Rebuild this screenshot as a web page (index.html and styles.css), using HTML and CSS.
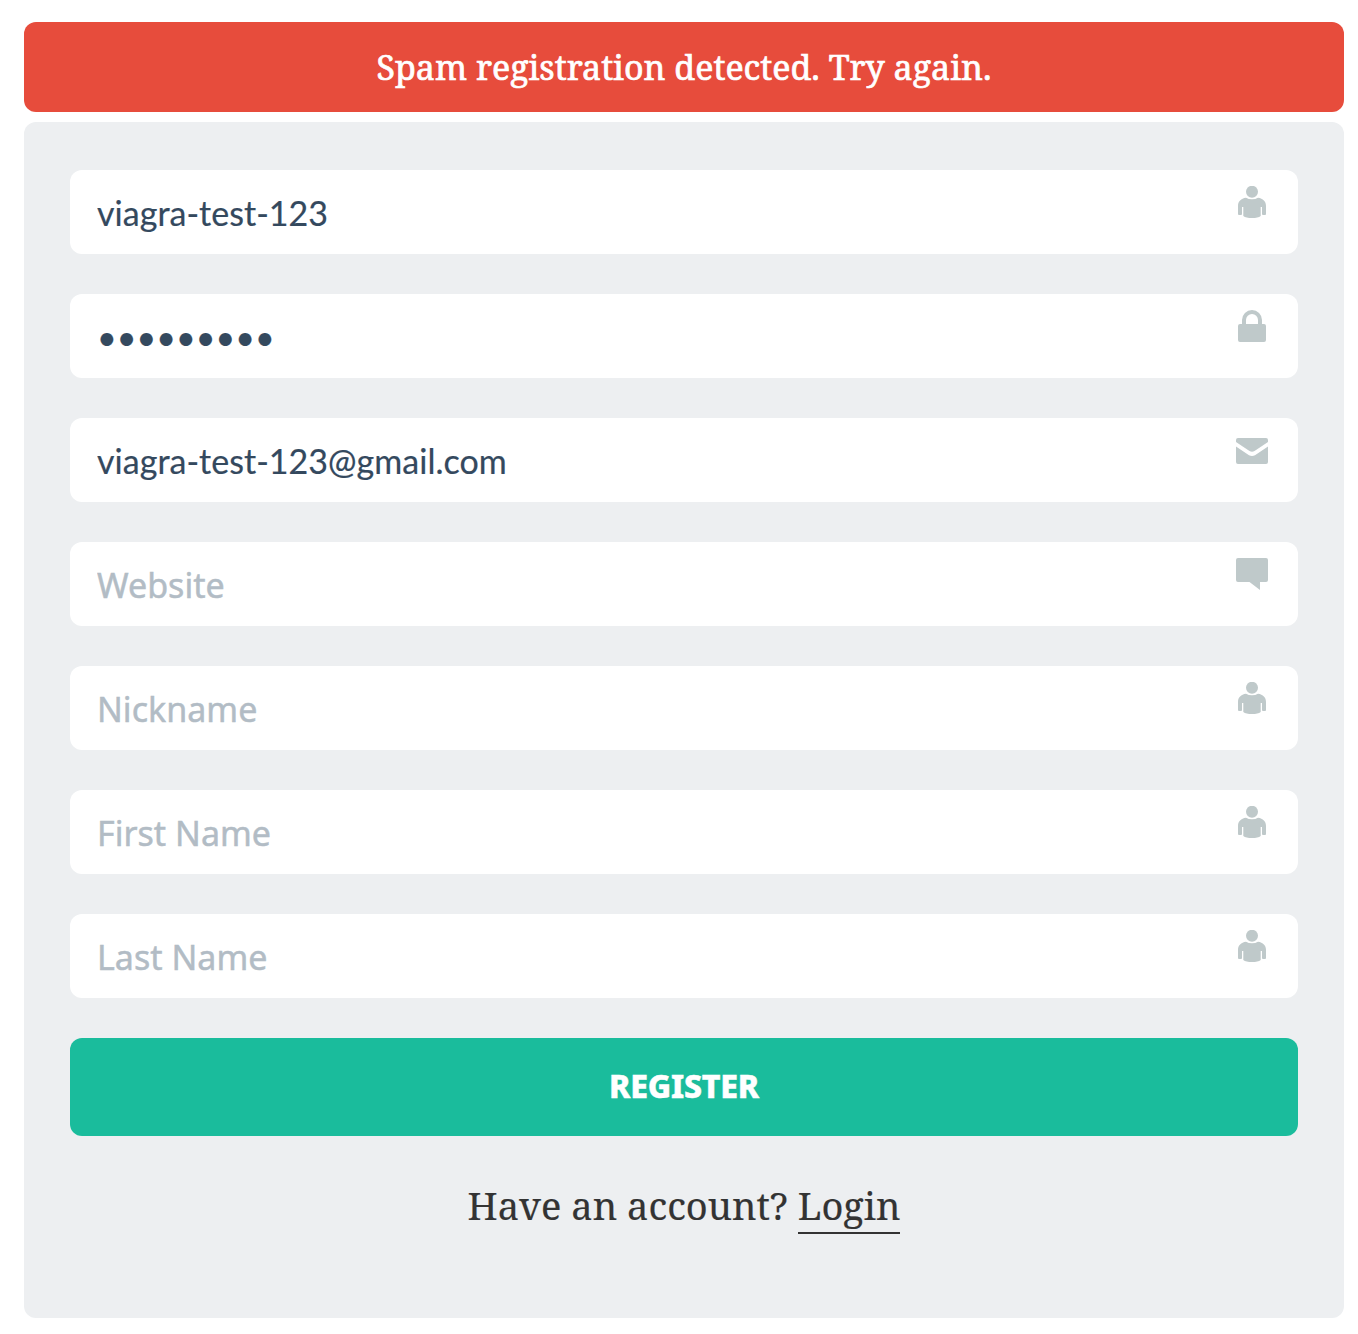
FILE: index.html
```html
<!DOCTYPE html>
<html lang="en">
<head>
<meta charset="utf-8">
<title>Register</title>
<link rel="stylesheet" href="styles.css">
</head>
<body>
<svg class="defs" width="0" height="0" aria-hidden="true">
  <symbol id="user" viewBox="0 0 32 32">
    <circle cx="16" cy="5.800" r="6"/>
    <path d="M10 11.800Q12.500 13.300 16 13.300T22 11.800C27 12.500 30 15.500 30 20V28.500Q28 29.500 26 28.500V21H24.700V30Q22 32 16 32T7.300 30V21H6V28.500Q4 29.500 2 28.500V20C2 15.500 5 12.500 10 11.800Z"/>
  </symbol>
  <symbol id="lock" viewBox="0 0 32 32">
    <path d="M6 14V10a10 10 0 0 1 20 0v4h2a2 2 0 0 1 2 2v14a2 2 0 0 1-2 2H4a2 2 0 0 1-2-2V16a2 2 0 0 1 2-2zM10 14h12v-4a6 6 0 0 0-12 0z"/>
  </symbol>
  <symbol id="mail" viewBox="0 0 32 32">
    <path d="M0 8V6a2 2 0 0 1 2-2h28a2 2 0 0 1 2 2v2L18.500 17Q16 18.500 13.500 17zM0 12.500L13 21.200Q16 22.800 19 21.200L32 12.500V28a2 2 0 0 1-2 2H2a2 2 0 0 1-2-2z"/>
  </symbol>
  <symbol id="chat" viewBox="0 0 32 32">
    <path d="M2 0h28a2 2 0 0 1 2 2v20a2 2 0 0 1-2 2h-6v8l-10.500-8H2a2 2 0 0 1-2-2V2a2 2 0 0 1 2-2z"/>
  </symbol>
</svg>
<div class="alert"><span class="alert-text">Spam registration detected. Try again.</span></div>
<form class="panel">
  <label class="field"><input class="input" type="text" value="viagra-test-123"><svg class="icon"><use href="#user"/></svg></label>
  <label class="field"><input class="input password" type="password" value="123456789"><svg class="icon"><use href="#lock"/></svg></label>
  <label class="field"><input class="input" type="text" value="viagra-test-123@gmail.com"><svg class="icon"><use href="#mail"/></svg></label>
  <label class="field"><input class="input" type="text" placeholder="Website"><svg class="icon"><use href="#chat"/></svg></label>
  <label class="field"><input class="input" type="text" placeholder="Nickname"><svg class="icon"><use href="#user"/></svg></label>
  <label class="field"><input class="input" type="text" placeholder="First Name"><svg class="icon"><use href="#user"/></svg></label>
  <label class="field"><input class="input" type="text" placeholder="Last Name"><svg class="icon"><use href="#user"/></svg></label>
  <button class="submit" type="button">REGISTER</button>
  <p class="login">Have an account? <a class="login-link">Login</a></p>
</form>
</body>
</html>
```
FILE: styles.css
```css
* { box-sizing: border-box; }
body { margin: 0; padding: 22px 14px 16px 24px; background: #fff; }
.defs { display: block; height: 0; }
.alert {
  display: flex; align-items: center; justify-content: center;
  height: 90px; margin-bottom: 10px; border-radius: 12px;
  background: #e74c3c; color: #fff;
  font: 400 34px "Noto Serif", "Droid Serif", "DejaVu Serif", serif;
  -webkit-text-stroke: 0.7px #fff;
}
.panel {
  display: flex; flex-direction: column; gap: 40px;
  height: 1196px; padding: 48px 46px; border-radius: 12px;
  background: #edeff1;
}
.field {
  display: flex; justify-content: space-between;
  height: 84px; padding: 0 30px 0 27px; border-radius: 12px; background: #fff;
}
.input {
  flex: 1; min-width: 0; height: 84px; padding: 1px 0 0; border: 0; outline: 0;
  background: transparent; color: #34495e;
  font: 34px Lato, sans-serif; letter-spacing: 0.03px;
  -webkit-text-stroke: 0.2px;
}
.input::placeholder {
  color: #b2bcc5; opacity: 1; font-family: "Noto Sans", sans-serif;
  -webkit-text-stroke: 0.5px #b2bcc5;
}
.icon { width: 32px; height: 32px; margin-top: 16px; fill: #bfc9ca; }
.submit {
  height: 98px; padding: 0 0 4px; border: 0; border-radius: 12px;
  background: #1abc9c; color: #fff;
  font: 800 32px "Noto Sans", sans-serif; letter-spacing: -0.2px;
  -webkit-text-stroke: 0.5px #fff;
}
.login {
  margin: 0; padding-top: 3px; text-align: center; color: #333;
  font: 38px "Noto Serif", "Droid Serif", "DejaVu Serif", serif;
  -webkit-text-stroke: 0.2px;
}
.login-link { padding-bottom: 1px; border-bottom: 2px solid #333; }
```
